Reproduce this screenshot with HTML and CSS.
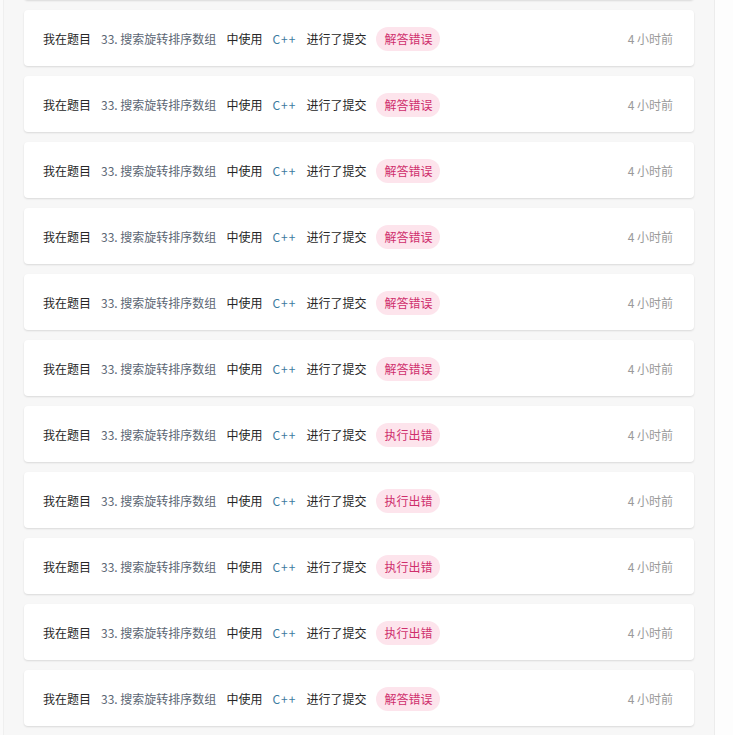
FILE: index.html
```html
<!DOCTYPE html>
<html lang="zh">
<head>
<meta charset="utf-8">
<link rel="stylesheet" href="styles.css">
</head>
<body>
<div class="page">
  <div class="edge-left"></div>
  <main class="main">
    <ul class="list">
      <li class="card ghost"></li>
      <li class="card"><span class="who">我在题目</span><span class="title">33. 搜索旋转排序数组</span><span class="txt">中使用</span><span class="lang">C++</span><span class="txt">进行了提交</span><span class="badge">解答错误</span><span class="time">4 小时前</span></li>
      <li class="card"><span class="who">我在题目</span><span class="title">33. 搜索旋转排序数组</span><span class="txt">中使用</span><span class="lang">C++</span><span class="txt">进行了提交</span><span class="badge">解答错误</span><span class="time">4 小时前</span></li>
      <li class="card"><span class="who">我在题目</span><span class="title">33. 搜索旋转排序数组</span><span class="txt">中使用</span><span class="lang">C++</span><span class="txt">进行了提交</span><span class="badge">解答错误</span><span class="time">4 小时前</span></li>
      <li class="card"><span class="who">我在题目</span><span class="title">33. 搜索旋转排序数组</span><span class="txt">中使用</span><span class="lang">C++</span><span class="txt">进行了提交</span><span class="badge">解答错误</span><span class="time">4 小时前</span></li>
      <li class="card"><span class="who">我在题目</span><span class="title">33. 搜索旋转排序数组</span><span class="txt">中使用</span><span class="lang">C++</span><span class="txt">进行了提交</span><span class="badge">解答错误</span><span class="time">4 小时前</span></li>
      <li class="card"><span class="who">我在题目</span><span class="title">33. 搜索旋转排序数组</span><span class="txt">中使用</span><span class="lang">C++</span><span class="txt">进行了提交</span><span class="badge">解答错误</span><span class="time">4 小时前</span></li>
      <li class="card"><span class="who">我在题目</span><span class="title">33. 搜索旋转排序数组</span><span class="txt">中使用</span><span class="lang">C++</span><span class="txt">进行了提交</span><span class="badge">执行出错</span><span class="time">4 小时前</span></li>
      <li class="card"><span class="who">我在题目</span><span class="title">33. 搜索旋转排序数组</span><span class="txt">中使用</span><span class="lang">C++</span><span class="txt">进行了提交</span><span class="badge">执行出错</span><span class="time">4 小时前</span></li>
      <li class="card"><span class="who">我在题目</span><span class="title">33. 搜索旋转排序数组</span><span class="txt">中使用</span><span class="lang">C++</span><span class="txt">进行了提交</span><span class="badge">执行出错</span><span class="time">4 小时前</span></li>
      <li class="card"><span class="who">我在题目</span><span class="title">33. 搜索旋转排序数组</span><span class="txt">中使用</span><span class="lang">C++</span><span class="txt">进行了提交</span><span class="badge">执行出错</span><span class="time">4 小时前</span></li>
      <li class="card"><span class="who">我在题目</span><span class="title">33. 搜索旋转排序数组</span><span class="txt">中使用</span><span class="lang">C++</span><span class="txt">进行了提交</span><span class="badge">解答错误</span><span class="time">4 小时前</span></li>
    </ul>
  </main>
  <div class="edge-right"></div>
</div>
</body>
</html>
```

FILE: styles.css
```css
html, body {
  margin: 0;
  padding: 0;
  height: 100%;
  overflow: hidden;
  background: #fafafa;
  font-family: "Noto Sans CJK SC", "Noto Sans", sans-serif;
  font-size: 12px;
}

.page {
  display: flex;
  height: 735px;
  overflow: hidden;
}

.edge-left {
  width: 3px;
  flex: none;
  background: #fafafa;
  border-right: 1px solid #efefef;
}

.main {
  width: 670px;
  flex: none;
  padding: 0 20px;
  background: #f7f7f7;
  border-right: 1px solid #ececec;
}

.edge-right {
  flex: 1;
  background: #fdfdfd;
}

.list {
  list-style: none;
  margin: -56px 0 0;
  padding: 0;
  display: flex;
  flex-direction: column;
  gap: 10px;
}

.card {
  height: 56px;
  flex: none;
  box-sizing: border-box;
  background: #fff;
  border-radius: 4px;
  box-shadow: 0 1px 2px rgba(0, 0, 0, 0.12);
  display: flex;
  align-items: center;
  gap: 10px;
  padding: 1px 21px 0 19px;
  line-height: 16px;
  color: #262626;
}

.who, .txt {
  color: #262626;
}

.title {
  color: #5b6673;
}

.lang {
  color: #3c7aa0;
  letter-spacing: 1px;
}

.badge {
  height: 24px;
  line-height: 24px;
  padding: 0 8px;
  border-radius: 12px;
  background: #fde4ec;
  color: #cf2f6c;
}

.time {
  margin-left: auto;
  color: #9a9a9a;
}
```
